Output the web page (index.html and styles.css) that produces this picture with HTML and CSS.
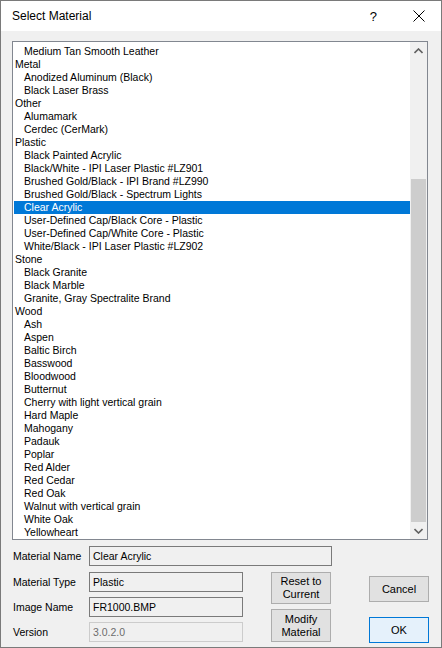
FILE: index.html
```html
<!DOCTYPE html>
<html lang="en">
<head>
    <meta charset="UTF-8">
    <meta name="viewport" content="width=device-width, initial-scale=1.0">
    <title>Select Material</title>
    <link rel="stylesheet" href="styles.css">
</head>
<body>
    <div class="window">
        <div class="titlebar">
            <span class="title">Select Material</span>
            <span class="help">?</span>
            <svg class="close" width="12" height="12" viewBox="0 0 12 12">
                <path d="M0.5 0.5 L11.5 11.5 M11.5 0.5 L0.5 11.5" stroke="#000" stroke-width="1" fill="none"/>
            </svg>
        </div>

        <div class="content">
            <div class="listbox">
                <div class="items">
                    <div class="item sub">Medium Tan Smooth Leather</div>
                    <div class="item">Metal</div>
                    <div class="item sub">Anodized Aluminum (Black)</div>
                    <div class="item sub">Black Laser Brass</div>
                    <div class="item">Other</div>
                    <div class="item sub">Alumamark</div>
                    <div class="item sub">Cerdec (CerMark)</div>
                    <div class="item">Plastic</div>
                    <div class="item sub">Black Painted Acrylic</div>
                    <div class="item sub">Black/White - IPI Laser Plastic #LZ901</div>
                    <div class="item sub">Brushed Gold/Black - IPI Brand #LZ990</div>
                    <div class="item sub">Brushed Gold/Black - Spectrum Lights</div>
                    <div class="item sub selected">Clear Acrylic</div>
                    <div class="item sub">User-Defined Cap/Black Core - Plastic</div>
                    <div class="item sub">User-Defined Cap/White Core - Plastic</div>
                    <div class="item sub">White/Black - IPI Laser Plastic #LZ902</div>
                    <div class="item">Stone</div>
                    <div class="item sub">Black Granite</div>
                    <div class="item sub">Black Marble</div>
                    <div class="item sub">Granite, Gray Spectralite Brand</div>
                    <div class="item">Wood</div>
                    <div class="item sub">Ash</div>
                    <div class="item sub">Aspen</div>
                    <div class="item sub">Baltic Birch</div>
                    <div class="item sub">Basswood</div>
                    <div class="item sub">Bloodwood</div>
                    <div class="item sub">Butternut</div>
                    <div class="item sub">Cherry with light vertical grain</div>
                    <div class="item sub">Hard Maple</div>
                    <div class="item sub">Mahogany</div>
                    <div class="item sub">Padauk</div>
                    <div class="item sub">Poplar</div>
                    <div class="item sub">Red Alder</div>
                    <div class="item sub">Red Cedar</div>
                    <div class="item sub">Red Oak</div>
                    <div class="item sub">Walnut with vertical grain</div>
                    <div class="item sub">White Oak</div>
                    <div class="item sub">Yellowheart</div>
                </div>
                <div class="scrollbar">
                    <div class="arrow">
                        <svg width="9" height="6" viewBox="0 0 9 6">
                            <path d="M0.5 5 L4.5 1 L8.5 5" stroke="#606060" stroke-width="1.6" fill="none"/>
                        </svg>
                    </div>
                    <div class="track">
                        <div class="thumb"></div>
                    </div>
                    <div class="arrow">
                        <svg width="9" height="6" viewBox="0 0 9 6">
                            <path d="M0.5 1 L4.5 5 L8.5 1" stroke="#606060" stroke-width="1.6" fill="none"/>
                        </svg>
                    </div>
                </div>
            </div>

            <div class="bottom">
                <div class="details">
                    <div class="field-row">
                        <label class="label">Material Name</label>
                        <div class="textbox wide">Clear Acrylic</div>
                    </div>
                    <div class="lower">
                        <div class="fields">
                            <div class="field-row">
                                <label class="label">Material Type</label>
                                <div class="textbox">Plastic</div>
                            </div>
                            <div class="field-row">
                                <label class="label">Image Name</label>
                                <div class="textbox">FR1000.BMP</div>
                            </div>
                            <div class="field-row">
                                <label class="label">Version</label>
                                <div class="textbox disabled">3.0.2.0</div>
                            </div>
                        </div>
                        <div class="side-buttons">
                            <button class="btn tall">Reset to<br>Current</button>
                            <button class="btn taller">Modify<br>Material</button>
                        </div>
                    </div>
                </div>
                <div class="dialog-buttons">
                    <button class="btn">Cancel</button>
                    <button class="btn default">OK</button>
                </div>
            </div>
        </div>
    </div>
</body>
</html>
```

FILE: styles.css
```css
body {
    margin: 0;
    font-family: "Liberation Sans", Arial, sans-serif;
    font-size: 10.5px;
    color: #000;
}
.window {
    width: 442px;
    height: 648px;
    box-sizing: border-box;
    border: 1px solid #7a7a7a;
    background-color: #f0f0f0;
}
.titlebar {
    height: 30px;
    background: white;
    display: flex;
    align-items: center;
    padding-left: 11px;
}
.title {
    font-size: 12px;
    flex: 1;
}
.help {
    font-size: 13px;
    margin-right: 36px;
}
.close {
    margin-right: 16px;
}
.content {
    padding: 10px 0 0 11px;
}
.listbox {
    width: 416px;
    height: 499px;
    box-sizing: border-box;
    border: 1px solid #828790;
    background: white;
    display: flex;
    overflow: hidden;
}
.items {
    flex: 1;
    padding: 3px 0 0 1px;
}
.item {
    height: 13px;
    line-height: 13px;
    padding-left: 1px;
    white-space: nowrap;
}
.item.sub {
    padding-left: 10px;
}
.item.selected {
    background-color: #0078d7;
    color: white;
}
.scrollbar {
    width: 17px;
    background-color: #f0f0f0;
    display: flex;
    flex-direction: column;
}
.arrow {
    height: 17px;
    display: flex;
    align-items: center;
    justify-content: center;
}
.track {
    flex: 1;
    padding-top: 120px;
}
.thumb {
    height: 343px;
    margin: 0 1px;
    background-color: #cdcdcd;
}
.bottom {
    display: flex;
    margin-top: 6px;
}
.details {
    width: 320px;
    display: flex;
    flex-direction: column;
    gap: 6px;
}
.field-row {
    display: flex;
    align-items: center;
    height: 20px;
}
.label {
    width: 76px;
    padding-left: 1px;
}
.textbox {
    width: 154px;
    height: 20px;
    box-sizing: border-box;
    border: 1px solid #7a7a7a;
    padding: 0 3px;
    line-height: 18px;
}
.textbox.wide {
    width: 243px;
}
.textbox.disabled {
    border-color: #cccccc;
    color: #6d6d6d;
}
.lower {
    display: flex;
    gap: 28px;
}
.fields {
    display: flex;
    flex-direction: column;
    gap: 5px;
}
.side-buttons {
    display: flex;
    flex-direction: column;
    gap: 5px;
}
.btn {
    width: 60px;
    height: 26px;
    font-family: "Liberation Sans", Arial, sans-serif;
    font-size: 11px;
    background-color: #e1e1e1;
    border: 1px solid #adadad;
    padding: 0;
    line-height: 13px;
    color: #000;
}
.btn.tall {
    height: 32px;
}
.btn.taller {
    height: 33px;
}
.btn.default {
    background-color: #e5f1fb;
    border-color: #0078d7;
}
.dialog-buttons {
    display: flex;
    flex-direction: column;
    gap: 15px;
    margin-left: 37px;
    padding-top: 30px;
}
```
